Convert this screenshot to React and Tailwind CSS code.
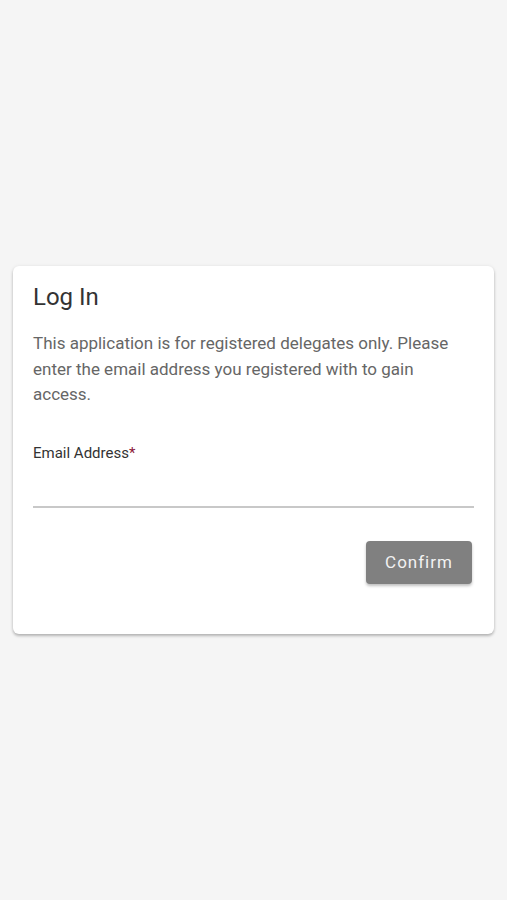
import React, { useState } from "react";

function App() {
  const [email, setEmail] = useState("");

  return (
    <div
      className="min-h-[900px] bg-[#f5f5f5] flex items-center px-[13px]"
      style={{ fontFamily: "Roboto, 'Noto Sans', Arial, sans-serif" }}
    >
      <div className="w-full bg-white rounded-[6px] shadow-[0_2px_3px_rgba(0,0,0,0.25),0_0_4px_rgba(0,0,0,0.06)] px-[20px] pt-[15px] pb-[50px]">
        <h1 className="text-[24px] leading-[32px] text-[#333333]">Log In</h1>
        <p className="mt-[18px] text-[17px] leading-[25.5px] text-[#666666]">
          This application is for registered delegates only. Please enter the
          email address you registered with to gain access.
        </p>
        <div className="mt-[35px]">
          <label className="block text-[15px] leading-[20px] text-[#333333]">
            Email Address<span className="text-[#8b1538]">*</span>
          </label>
          <input
            type="email"
            value={email}
            onChange={(e) => setEmail(e.target.value)}
            className="w-full h-[44px] mt-[1px] bg-transparent outline-none border-b-2 border-[#c8c8c8] text-[16px] text-[#333333]"
          />
        </div>
        <div className="flex justify-end mt-[33px] pr-[2px]">
          <button className="w-[106px] h-[43px] rounded-[4px] bg-[#808080] text-[#f2f2f2] text-[17px] tracking-[1px] shadow-[0_2px_3px_rgba(0,0,0,0.25)]">
            Confirm
          </button>
        </div>
      </div>
    </div>
  );
}

export default App;
